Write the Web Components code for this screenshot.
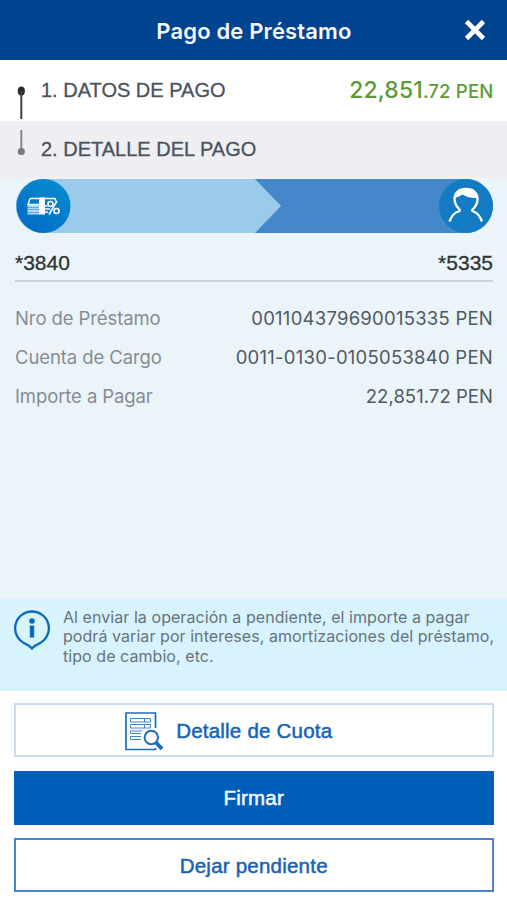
<!DOCTYPE html>
<html lang="es">
<head>
<meta charset="utf-8">
<title>Pago de Préstamo</title>
<style>
  html, body {
    margin: 0;
    height: 100%;
    background: #fff;
  }
</style>
</head>
<body>
<loan-screen>
  <screen-header slot="header">Pago de Préstamo</screen-header>

  <payment-step slot="steps" state="done">1. DATOS DE PAGO
    <money-amount slot="amount" whole="22,851" rest=".72 PEN"></money-amount>
  </payment-step>
  <payment-step slot="steps" state="current">2. DETALLE DEL PAGO</payment-step>

  <transfer-route from="*3840" to="*5335"></transfer-route>
  <detail-list>
    <detail-row label="Nro de Préstamo" style="--value-spacing: 0.24px">001104379690015335 PEN</detail-row>
    <detail-row label="Cuenta de Cargo" style="--value-spacing: 0.25px">0011-0130-0105053840 PEN</detail-row>
    <detail-row label="Importe a Pagar" style="--value-spacing: 0.05px">22,851.72 PEN</detail-row>
  </detail-list>

  <info-note slot="note">Al enviar la operación a pendiente, el importe a pagar<br>podrá variar por intereses, amortizaciones del préstamo,<br>tipo de cambio, etc.</info-note>

  <action-button slot="actions" kind="light">
    <svg slot="icon" width="40" height="40" viewBox="0 0 40 40" fill="none" stroke="#1a6dbd">
      <path d="M32.500 17V2H3V38.500H32.500V37" stroke-width="1.700"/>
      <path d="M7.500 7.500H27.500V11H7.500ZM7.500 13.500H27.500V17H7.500ZM21.500 7.500V11M21.500 13.500V17M19 20H7.500V22.500H18M18 25.500H7.500V28.500H18" stroke="#3f86c9" stroke-width="1"/>
      <circle cx="28.300" cy="26.500" r="6.700" stroke-width="2"/>
      <path d="M33 31.500L39 38" stroke-width="4"/>
    </svg>
    Detalle de Cuota
  </action-button>
  <action-button slot="actions" kind="primary">Firmar</action-button>
  <action-button slot="actions" kind="outline">Dejar pendiente</action-button>
</loan-screen>

<script>
  // Attach an open shadow root filled with the given markup
  function render(host, html) {
    const template = document.createElement('template');
    template.innerHTML = html;
    host.attachShadow({ mode: 'open' }).appendChild(template.content.cloneNode(true));
  }

  // Page frame: header, steps, body, note and buttons
  class LoanScreen extends HTMLElement {
    constructor() {
      super();
      render(this, `
        <style>
          :host {
            display: flex;
            flex-direction: column;
            width: 100%;
            height: 900px;
            overflow: hidden;
            font-family: Inter, "Liberation Sans", sans-serif;
            color: #4b535d;
          }
          main {
            flex: 1;
            padding: 1px 14px 0 15px;
            background: #ebf4f9;
          }
          footer {
            display: flex;
            flex-direction: column;
            gap: 13.500px;
            padding: 12px 13.500px 8px 14px;
          }
        </style>
        <slot name="header"></slot>
        <slot name="steps"></slot>
        <main><slot></slot></main>
        <slot name="note"></slot>
        <footer><slot name="actions"></slot></footer>
      `);
    }
  }

  class ScreenHeader extends HTMLElement {
    constructor() {
      super();
      render(this, `
        <style>
          :host {
            display: grid;
            grid-template-columns: 60px 1fr 60px;
            align-items: center;
            height: 60px;
            background: #00438f;
            color: #f3f9ff;
          }
          h1 {
            grid-column: 2;
            margin: 1px 0 0 1px;
            font-size: 22px;
            font-weight: 600;
            letter-spacing: 0.150px;
            text-align: center;
            white-space: nowrap;
          }
          svg {
            justify-self: end;
            margin-right: 20px;
          }
        </style>
        <h1><slot></slot></h1>
        <svg width="24" height="24" viewBox="0 0 24 24" stroke="#fff" stroke-width="4.600">
          <path d="M3.500 3.500L20.500 20.500M20.500 3.500L3.500 20.500"/>
        </svg>
      `);
    }
  }

  class PaymentStep extends HTMLElement {
    constructor() {
      super();
      const done = this.getAttribute('state') === 'done';
      // the connector leaves downwards from the first step and comes in from above on the second
      const connector = done
        ? '<ellipse cx="7.300" cy="31" rx="3.600" ry="4.500" fill="#2c2d30"/><path d="M7.300 31V59" stroke="#3e4044" stroke-width="2"/>'
        : '<path d="M7.300 9V30" stroke="#85878c" stroke-width="2"/><circle cx="7.300" cy="30.500" r="3.600" fill="#77797e"/>';
      render(this, `
        <style>
          :host {
            display: flex;
            align-items: center;
            height: ${done ? 61 : 57}px;
            padding: 0 14px;
            background: ${done ? '#fff' : '#eeeef3'};
          }
          svg {
            align-self: flex-start;
            flex: none;
          }
          .title {
            flex: 1;
            margin-left: 13px;
            padding-bottom: 1px;
            font: 20px "Liberation Sans", Arial, sans-serif;
            white-space: nowrap;
            -webkit-text-stroke: 0.300px currentColor;
          }
        </style>
        <svg width="14" height="${done ? 61 : 57}">${connector}</svg>
        <div class="title"><slot></slot></div>
        <slot name="amount"></slot>
      `);
    }
  }

  class MoneyAmount extends HTMLElement {
    constructor() {
      super();
      render(this, `
        <style>
          :host {
            display: block;
            margin: 0 -0.500px 2px 0;
            color: #5b9a36;
            font-weight: 500;
            letter-spacing: 0.150px;
            white-space: nowrap;
          }
          .whole { font-size: 22.900px; }
          .rest { font-size: 18.600px; }
        </style>
        <span class="whole">${this.getAttribute('whole')}</span><span class="rest">${this.getAttribute('rest')}</span>
      `);
    }
  }

  // Origin account -> destination account
  class TransferRoute extends HTMLElement {
    constructor() {
      super();
      render(this, `
        <style>
          :host {
            display: block;
            border-bottom: 2px solid #cdd5da;
          }
          .bar {
            display: flex;
            justify-content: space-between;
            height: 54px;
            margin-left: 0.500px;
            border-radius: 27px;
            background: #4487ca;
          }
          .origin {
            width: 265.500px;
            border-radius: 27px 0 0 27px;
            background: #9bcbeb;
            clip-path: polygon(0 0, 239.500px 0, 265.500px 50%, 239.500px 100%, 0 100%);
          }
          svg { display: block; }
          .names {
            display: flex;
            justify-content: space-between;
            align-items: center;
            height: 47px;
            color: #2f3336;
            font: 21px "Liberation Sans", Arial, sans-serif;
            -webkit-text-stroke: 0.300px currentColor;
          }
          .names span { margin-top: 12px; }
        </style>
        <div class="bar">
          <div class="origin">
            <svg width="55" height="54" viewBox="0 0 55 54">
              <defs>
                <linearGradient id="disc" x1="0" y1="1" x2="0.700" y2="0">
                  <stop offset="0" stop-color="#0067c5"/>
                  <stop offset="1" stop-color="#078bcd"/>
                </linearGradient>
              </defs>
              <circle cx="27.500" cy="27" r="27" fill="url(#disc)"/>
              <path d="M14 19.500H39L40 22M14 19.500L12 25.500H24" fill="none" stroke="#fff" stroke-width="1.500"/>
              <path d="M11.500 27H24M11.500 29.500H24M11.500 32H24M11.500 34.500H24M29 27H31.500M29 30H34M29 33H32" stroke="#b5dbf4" stroke-width="1.800"/>
              <path d="M23 18.500H29V35.500H23Z" fill="#fff"/>
              <g fill="none" stroke="#fff" stroke-width="1.600">
                <circle cx="34.500" cy="25" r="2.500"/>
                <circle cx="40.500" cy="32" r="2.500"/>
                <path d="M41 22L33 35.500"/>
              </g>
            </svg>
          </div>
          <svg width="54" height="54" viewBox="0 0 54 54">
            <circle cx="27" cy="27" r="27" fill="#127bc4"/>
            <g fill="none" stroke="#fff" stroke-width="2.300" stroke-linejoin="round">
              <path d="M10.500 42.500C12.500 37 15 33.500 19.500 32.500Q21.500 32 20.500 30.500C16.500 26.500 15.500 23 15.500 20C15.500 13.500 20 10 27 10S38.500 13.500 38.500 20C38.500 23 37.500 27 33.500 30.500Q32.500 32 34.500 32.500C39 34 41 37 43 42.500"/>
            </g>
            <path d="M15.500 19C16 13 20.500 9.500 27 9.500S38.500 13.500 38.500 19Q30 19.500 23.500 15.500Q20 17.500 15.500 19Z" fill="#fff"/>
          </svg>
        </div>
        <div class="names">
          <span>${this.getAttribute('from')}</span>
          <span>${this.getAttribute('to')}</span>
        </div>
      `);
    }
  }

  class DetailList extends HTMLElement {
    constructor() {
      super();
      render(this, `
        <style>
          :host {
            display: grid;
            grid-auto-rows: 39px;
            padding-top: 16px;
          }
        </style>
        <slot></slot>
      `);
    }
  }

  class DetailRow extends HTMLElement {
    constructor() {
      super();
      render(this, `
        <style>
          :host {
            display: flex;
            justify-content: space-between;
            align-items: center;
            font-size: 18.500px;
            white-space: nowrap;
          }
          .label {
            color: #858d92;
            letter-spacing: -0.100px;
          }
          .value {
            color: #515962;
            letter-spacing: var(--value-spacing, 0);
          }
        </style>
        <span class="label">${this.getAttribute('label')}</span>
        <span class="value"><slot></slot></span>
      `);
    }
  }

  class InfoNote extends HTMLElement {
    constructor() {
      super();
      render(this, `
        <style>
          :host {
            display: flex;
            gap: 13px;
            box-sizing: border-box;
            height: 93px;
            padding: 10px 0 0 13px;
            background: #d7f3fc;
          }
          svg {
            flex: none;
            margin-top: 1px;
          }
          p {
            margin: 0;
            color: #66737d;
            font-size: 16px;
            line-height: 19.300px;
            letter-spacing: 0.060px;
            white-space: nowrap;
          }
        </style>
        <svg width="37" height="42" viewBox="0 0 37 42">
          <path d="M19 2.500A16.800 16.800 0 0 0 12 34.600Q15.500 36 19 39.500Q22.500 36 26 34.600A16.800 16.800 0 0 0 19 2.500Z" fill="none" stroke="#0b69bf" stroke-width="2.300"/>
          <circle cx="19" cy="12" r="2.800" fill="#0b69bf"/>
          <path d="M19 16.500V28.500" stroke="#0b69bf" stroke-width="4.400"/>
        </svg>
        <p><slot></slot></p>
      `);
    }
  }

  class ActionButton extends HTMLElement {
    constructor() {
      super();
      render(this, `
        <style>
          :host {
            display: block;
            height: 54px;
          }
          button {
            display: flex;
            justify-content: center;
            align-items: center;
            gap: 13px;
            box-sizing: border-box;
            width: 100%;
            height: 100%;
            padding: 1px 0 0;
            border: 2px solid #4484c7;
            background: #fff;
            color: #1763b4;
            font: 20.500px "Liberation Sans", Arial, sans-serif;
            letter-spacing: 0.220px;
            -webkit-text-stroke: 0.500px currentColor;
          }
          :host([kind="light"]) button {
            border-color: #ccdcf0;
            padding-right: 52px;
          }
          :host([kind="primary"]) button {
            border-color: #0560b8;
            background: #005eb8;
            color: #f4f9ff;
          }
        </style>
        <button><slot name="icon"></slot><span><slot></slot></span></button>
      `);
    }
  }

  customElements.define('loan-screen', LoanScreen);
  customElements.define('screen-header', ScreenHeader);
  customElements.define('payment-step', PaymentStep);
  customElements.define('money-amount', MoneyAmount);
  customElements.define('transfer-route', TransferRoute);
  customElements.define('detail-list', DetailList);
  customElements.define('detail-row', DetailRow);
  customElements.define('info-note', InfoNote);
  customElements.define('action-button', ActionButton);
</script>
</body>
</html>
